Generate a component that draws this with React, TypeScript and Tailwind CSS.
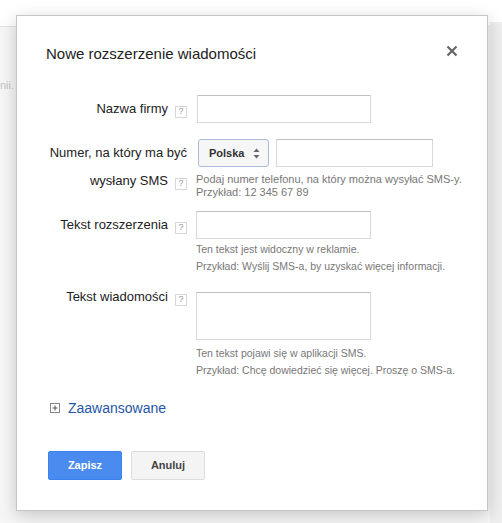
import React from "react";

function Help() {
  return (
    <span className="ml-[7px] inline-flex h-[12px] w-[12px] items-center justify-center border border-[#d6d6d6] align-[-1px] text-[9px] leading-none text-[#9a9a9a]">
      ?
    </span>
  );
}

const inputCls =
  "block h-[28px] border border-[#d9d9d9] border-t-[#c0c0c0] bg-white";

export default function App() {
  return (
    <div
      className="relative h-[523px] w-[502px] overflow-hidden bg-[#f6f6f6]"
      style={{ fontFamily: '"Liberation Sans", Arial, sans-serif' }}
    >
      <div className="h-[27px] border-b border-[#e2e2e2] bg-white" />
      <div className="mt-[50px] pl-0 text-[11px] text-[#c4c4c4]">nii.</div>
      <div className="absolute right-0 top-[22px] h-[501px] w-[12px] bg-[#eeeeee]" />

      <div className="absolute left-[16px] top-[15px] h-[496px] w-[472px] border border-[#c6c6c6] bg-white shadow-[0_4px_16px_rgba(0,0,0,0.2)]">
        <div className="relative">
          <div className="pl-[29px] pt-[28px] text-[15px] leading-[20px] text-[#222]">
            Nowe rozszerzenie wiadomości
          </div>
          <svg
            className="absolute left-[429px] top-[29px]"
            width="12"
            height="12"
            viewBox="0 0 12 12"
          >
            <path d="M1.5 1.5 L10.5 10.5 M10.5 1.5 L1.5 10.5" stroke="#666" strokeWidth="2.2" />
          </svg>
        </div>

        {/* Row 1 */}
        <div className="mt-[31px] flex items-start">
          <div className="w-[170px] text-right text-[13px] leading-[28px] text-[#222]">
            Nazwa firmy
            <Help />
          </div>
          <div className="pl-[10px]">
            <div className={inputCls + " w-[174px]"} />
          </div>
        </div>

        {/* Row 2 */}
        <div className="mt-[16px] flex items-start">
          <div className="w-[170px] text-right text-[13px] leading-[28px] text-[#222]">
            Numer, na który ma być
            <br />
            wysłany SMS
            <Help />
          </div>
          <div className="pl-[11px]">
            <div className="flex items-start">
              <div className="flex h-[28px] w-[71px] items-center justify-between rounded-[3px] border border-[#a9bbd6] bg-[#f6f6f6] pl-[10px] pr-[8px] text-[11px] font-bold text-[#333]">
                <span>Polska</span>
                <svg width="7" height="11" viewBox="0 0 7 11">
                  <path d="M3.5 0.5 L6.5 4 L0.5 4 Z" fill="#666" />
                  <path d="M3.5 10.5 L6.5 7 L0.5 7 Z" fill="#666" />
                </svg>
              </div>
              <div className={inputCls + " ml-[7px] w-[157px]"} />
            </div>
            <div className="-ml-[2px] mt-[6px] text-[11px] leading-[13px] text-[#777]">
              Podaj numer telefonu, na który można wysyłać SMS-y.
              <br />
              Przykład: 12 345 67 89
            </div>
          </div>
        </div>

        {/* Row 3 */}
        <div className="mt-[12px] flex items-start">
          <div className="w-[170px] text-right text-[13px] leading-[28px] text-[#222]">
            Tekst rozszerzenia
            <Help />
          </div>
          <div className="pl-[9px]">
            <div className={inputCls + " w-[175px]"} />
            <div className="mt-[2px] text-[10.5px] leading-[17px] text-[#777]">
              Ten tekst jest widoczny w reklamie.
              <br />
              Przykład: Wyślij SMS-a, by uzyskać więcej informacji.
            </div>
          </div>
        </div>

        {/* Row 4 */}
        <div className="mt-[17px] flex items-start">
          <div className="-mt-[9px] w-[170px] text-right text-[13px] leading-[28px] text-[#222]">
            Tekst wiadomości
            <Help />
          </div>
          <div className="pl-[9px]">
            <div className="block h-[48px] w-[175px] border border-[#d9d9d9] border-t-[#c0c0c0] bg-white" />
            <div className="mt-[5px] text-[10.5px] leading-[17px] text-[#777]">
              Ten tekst pojawi się w aplikacji SMS.
              <br />
              Przykład: Chcę dowiedzieć się więcej. Proszę o SMS-a.
            </div>
          </div>
        </div>

        {/* Advanced */}
        <div className="ml-[33px] mt-[19px] flex h-[20px] items-center">
          <svg width="10" height="10" viewBox="0 0 10 10">
            <rect x="0.5" y="0.5" width="9" height="9" fill="white" stroke="#888" />
            <path d="M2.5 5 H7.5 M5 2.5 V7.5" stroke="#555" strokeWidth="1" />
          </svg>
          <span className="ml-[8px] text-[14px] text-[#2456a8]">Zaawansowane</span>
        </div>

        {/* Buttons */}
        <div className="ml-[31px] mt-[33px] flex gap-[9px]">
          <button className="h-[29px] w-[74px] rounded-[2px] border border-[#3b82ee] bg-[#4a8bf0] text-[11px] font-bold text-white">
            Zapisz
          </button>
          <button className="h-[29px] w-[74px] rounded-[2px] border border-[#dcdcdc] bg-[#f4f4f4] text-[11px] font-bold text-[#444]">
            Anuluj
          </button>
        </div>
      </div>
    </div>
  );
}
